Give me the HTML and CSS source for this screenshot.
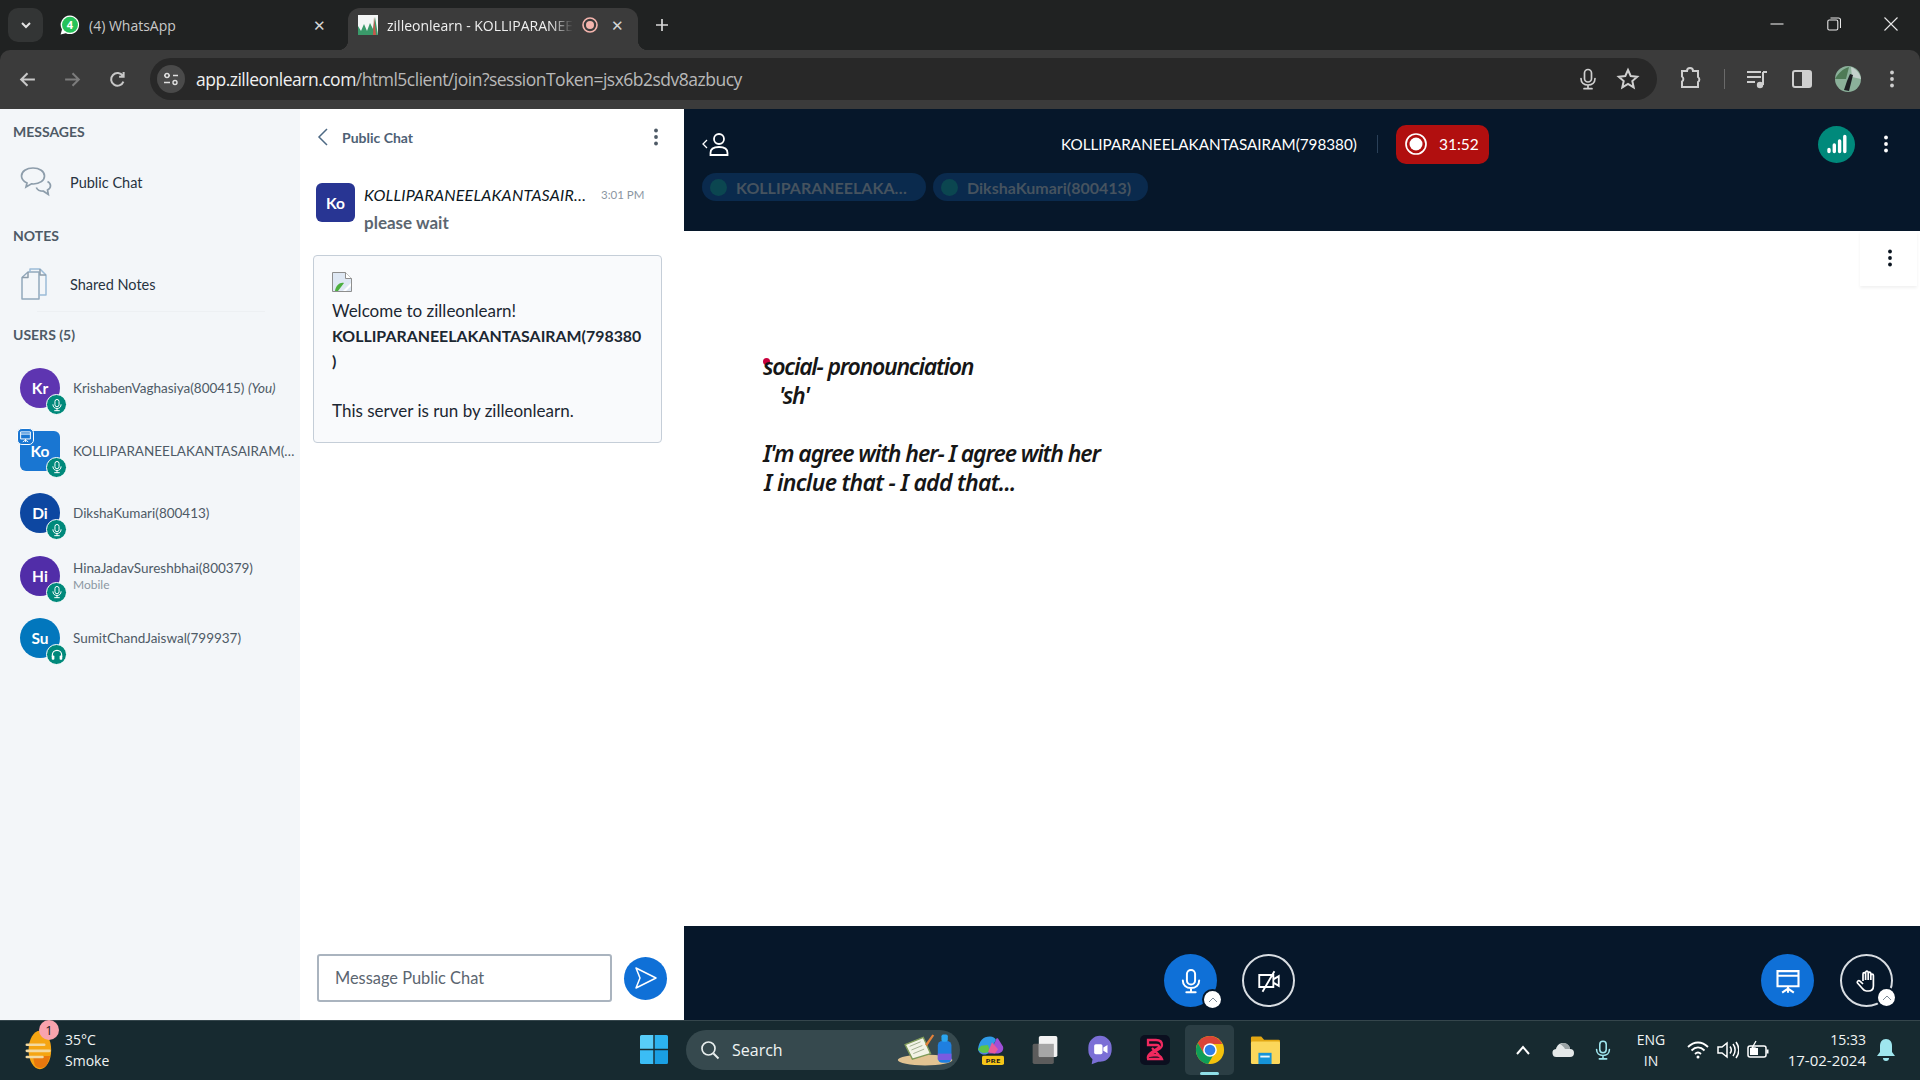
FILE: index.html
```html
<!DOCTYPE html>
<html lang="en">
<head>
  <meta charset="UTF-8" />
  <title>zilleonlearn - KOLLIPARANEELAKANTASAIRAM(798380)</title>
  <link rel="stylesheet" href="styles.css">
</head>
<body>

<svg class="defs" width="0" height="0">
  <symbol id="mic" viewBox="0 0 24 24">
    <rect x="8.5" y="2.5" width="7" height="12.5" rx="3.5" fill="none" stroke="currentColor" stroke-width="1.7"/>
    <path d="M5 11.5c0 4 3 6.5 7 6.5s7-2.5 7-6.5M12 18v3.5M8 21.7h8" fill="none" stroke="currentColor" stroke-width="1.7" stroke-linecap="round"/>
  </symbol>
  <symbol id="headset" viewBox="0 0 24 24">
    <path d="M4 15v-3a8 8 0 0 1 16 0v3" fill="none" stroke="currentColor" stroke-width="2"/>
    <rect x="3" y="13" width="4.5" height="7" rx="1.5" fill="currentColor"/>
    <rect x="16.5" y="13" width="4.5" height="7" rx="1.5" fill="currentColor"/>
  </symbol>
  <symbol id="screen" viewBox="0 0 24 24">
    <path d="M3 3.5h18v13H3zM3 7.5h18M12 16.5v2M12 18.5l-5 3.5M12 18.5l5 3.5M12 18.5v3.5" fill="none" stroke="currentColor" stroke-width="1.8"/>
  </symbol>
  <symbol id="dots" viewBox="0 0 4 18">
    <circle cx="2" cy="2.5" r="1.9" fill="currentColor"/>
    <circle cx="2" cy="9" r="1.9" fill="currentColor"/>
    <circle cx="2" cy="15.5" r="1.9" fill="currentColor"/>
  </symbol>
</svg>

<!-- browser chrome -->
<div class="tabstrip">
  <div class="tab-search">
    <svg width="12" height="12" viewBox="0 0 12 12"><path d="M2 4l4 4 4-4" fill="none" stroke="#e3e3e3" stroke-width="2"/></svg>
  </div>
  <div class="tab tab-idle">
    <svg class="favicon" viewBox="0 0 20 20">
      <path d="M10 .5a9.3 9.3 0 0 0-8 14L.6 19.5l5.2-1.3A9.3 9.3 0 1 0 10 .5z" fill="#fff"/>
      <circle cx="10" cy="9.8" r="8" fill="#25c25a"/>
      <text x="10" y="14" class="wa-count">4</text>
    </svg>
    <span class="tab-title">(4) WhatsApp</span>
    <span class="tab-close">✕</span>
  </div>
  <div class="tab tab-active">
    <svg class="favicon" viewBox="0 0 20 20">
      <rect width="20" height="20" fill="#f4f6f6"/>
      <path d="M0 20V11l3 5 3-7 3 7 3-8 3 6 2-12 3 18z" fill="#3a9a6a"/>
      <path d="M16 2l2 18h-3z" fill="#c9564b"/>
    </svg>
    <span class="tab-title">zilleonlearn - KOLLIPARANEELAKANTASAIRAM(798380)</span>
    <svg class="tab-rec" viewBox="0 0 16 16"><circle cx="8" cy="8" r="7" fill="none" stroke="#f5b5ae" stroke-width="1.6"/><circle cx="8" cy="8" r="4" fill="#f5b5ae"/></svg>
    <span class="tab-close">✕</span>
  </div>
  <svg class="new-tab" viewBox="0 0 14 14"><path d="M7 1v12M1 7h12" stroke="#d8d8d8" stroke-width="1.7"/></svg>
  <div class="win-controls">
    <svg viewBox="0 0 14 14"><path d="M.5 7h13" stroke="#e8e8e8" stroke-width="1.1"/></svg>
    <svg viewBox="0 0 14 14"><rect x=".8" y="3" width="10" height="10" rx="1.5" fill="none" stroke="#e8e8e8" stroke-width="1.1"/><path d="M3.5 1h8a2 2 0 0 1 2 2v8" fill="none" stroke="#e8e8e8" stroke-width="1.1"/></svg>
    <svg viewBox="0 0 14 14"><path d="M.5.5l13 13M13.5.5l-13 13" stroke="#e8e8e8" stroke-width="1.1"/></svg>
  </div>
</div>

<div class="toolbar">
  <svg class="nav-icon" viewBox="0 0 18 18"><path d="M16 9H3M9 3L3 9l6 6" fill="none" stroke="#c8c8c8" stroke-width="1.9"/></svg>
  <svg class="nav-icon nav-off" viewBox="0 0 18 18"><path d="M2 9h13M9 3l6 6-6 6" fill="none" stroke="#7c7c7c" stroke-width="1.9"/></svg>
  <svg class="nav-icon" viewBox="0 0 18 18"><path d="M14.6 11a6 6 0 1 1-.6-5.4M14.8 2v4.3h-4.3" fill="none" stroke="#c8c8c8" stroke-width="1.9"/></svg>
  <div class="omnibox">
    <div class="site-info">
      <svg width="16" height="16" viewBox="0 0 16 16"><path d="M1 4.5h6M1 11.5h6M10 4.5h5M10 11.5h0" stroke="#e0e0e0" stroke-width="1.6"/><circle cx="4" cy="4.5" r="2" fill="#4a4a4a" stroke="#e0e0e0" stroke-width="1.4"/><circle cx="12" cy="11.5" r="2" fill="#4a4a4a" stroke="#e0e0e0" stroke-width="1.4"/></svg>
    </div>
    <span class="url"><b>app.zilleonlearn.com</b>/html5client/join?sessionToken=jsx6b2sdv8azbucy</span>
    <svg class="omni-icon omni-mic"><use href="#mic"/></svg>
    <svg class="omni-icon" viewBox="0 0 24 24"><path d="M12 3l2.7 6 6.5.7-4.9 4.3 1.4 6.4L12 17l-5.700 3.400 1.400-6.400-4.900-4.300 6.500-.7z" fill="none" stroke="#cfcfcf" stroke-width="2"/></svg>
  </div>
  <svg class="tool-icon ext-icon" viewBox="0 0 24 24"><path d="M4 4h5a3 3 0 0 1 6 0h5v6a3 3 0 0 1 0 5v5H4v-5.500a3 3 0 0 0 0-5z" fill="none" stroke="#cfcfcf" stroke-width="2"/></svg>
  <span class="tool-divider"></span>
  <svg class="tool-icon media-icon" viewBox="0 0 24 24"><path d="M2 5h14M2 10h14M2 15h8" stroke="#cfcfcf" stroke-width="2"/><path d="M18 5v13" stroke="#cfcfcf" stroke-width="2"/><path d="M18 5h4" stroke="#cfcfcf" stroke-width="2"/><circle cx="15" cy="18" r="3.200" fill="#cfcfcf"/></svg>
  <svg class="tool-icon panel-icon" viewBox="0 0 24 24"><rect x="3" y="4" width="18" height="16" rx="2" fill="none" stroke="#cfcfcf" stroke-width="2"/><rect x="12" y="4" width="9" height="16" fill="#cfcfcf"/></svg>
  <svg class="profile" viewBox="0 0 26 26">
    <circle cx="13" cy="13" r="13" fill="#8bb09a"/>
    <path d="M0 13C4 6 8 3 14 1l-3 12z" fill="#4e7a56"/>
    <path d="M16 1c5 2 9 6 10 12l-9-2z" fill="#c3d0cc"/>
    <path d="M9 24l3-9 3-7 3 1-2 8-2 8z" fill="#1d1f24"/>
  </svg>
  <svg class="chrome-menu" viewBox="0 0 4 18"><use href="#dots"/></svg>
</div>

<div class="app">

  <aside class="sidebar">
    <div class="side-head">MESSAGES</div>
    <div class="side-item">
      <svg class="side-icon" viewBox="0 0 32 32" fill="none" stroke="#8d9dab" stroke-width="1.700">
        <path d="M13 2C6.500 2 1.500 5.500 1.500 10c0 3 2.200 5.500 5.500 7l-1 4 5.500-3.200c.7.100 1.300.200 2 .200 6.200 0 11-3.500 11-8S19.500 2 13 2z"/>
        <path d="M27.500 15.500c2 1 3 2.500 3 4.300 0 1.800-1.200 3.300-3 4.200l.8 4.500-4.800-3.300c-3.500 0-6.300-1.500-7.200-3.700"/>
      </svg>
      <span>Public Chat</span>
    </div>
    <div class="side-head notes-head">NOTES</div>
    <div class="side-item notes-item">
      <svg class="side-icon" viewBox="0 0 32 32" fill="none" stroke="#8d9dab" stroke-width="1.500" stroke-linejoin="round">
        <path d="M2 9.500L8 4h11v27H2z" stroke="#93a9bc"/>
        <path d="M2 9.500h6V4"/>
        <path d="M10 4V1h10l6 6v20h-7" stroke="#9cbcd8"/>
        <path d="M20 1v6h6"/>
      </svg>
      <span>Shared Notes</span>
    </div>
    <div class="side-rule"></div>
    <div class="side-head users-head">USERS (5)</div>
    <div class="user-list">
      <div class="user">
        <div class="avatar" style="background: #5e35b1">Kr<span class="voice"><svg><use href="#mic"/></svg></span></div>
        <div class="user-name">KrishabenVaghasiya(800415) <i>(You)</i></div>
      </div>
      <div class="user">
        <div class="avatar avatar-mod" style="background: #1976d2">Ko
          <span class="presenter"><svg><use href="#screen"/></svg></span>
          <span class="voice"><svg><use href="#mic"/></svg></span>
        </div>
        <div class="user-name">KOLLIPARANEELAKANTASAIRAM(798380)</div>
      </div>
      <div class="user">
        <div class="avatar" style="background: #0d47a1">Di<span class="voice"><svg><use href="#mic"/></svg></span></div>
        <div class="user-name">DikshaKumari(800413)</div>
      </div>
      <div class="user">
        <div class="avatar" style="background: #512da8">Hi<span class="voice"><svg><use href="#mic"/></svg></span></div>
        <div class="user-name">HinaJadavSureshbhai(800379)<small>Mobile</small></div>
      </div>
      <div class="user">
        <div class="avatar" style="background: #0277bd">Su<span class="voice"><svg><use href="#headset"/></svg></span></div>
        <div class="user-name">SumitChandJaiswal(799937)</div>
      </div>
    </div>
  </aside>

  <section class="chat">
    <div class="chat-head">
      <svg class="chat-back" viewBox="0 0 12 18"><path d="M10 1L2 9l8 8" fill="none" stroke="#4e6a85" stroke-width="1.500"/></svg>
      <span class="chat-title">Public Chat</span>
      <svg class="chat-menu" viewBox="0 0 4 18"><use href="#dots"/></svg>
    </div>
    <div class="chat-body">
      <div class="message">
        <div class="msg-avatar">Ko</div>
        <div class="msg-main">
          <div class="msg-top">
            <span class="msg-name">KOLLIPARANEELAKANTASAIRAM(798380)</span>
            <span class="msg-time">3:01 PM</span>
          </div>
          <div class="msg-text">please wait</div>
        </div>
      </div>
      <div class="welcome">
        <svg class="broken" viewBox="0 0 20 20">
          <path d="M.5.5h13l6 6v13H.5z" fill="#dfe8f4" stroke="#8e8e8e"/>
          <path d="M13.500.5v6h6" fill="#fff" stroke="#8e8e8e"/>
          <path d="M3 19c1-6 5-9 9-8l-6 8z" fill="#4caf3f"/>
          <path d="M11 19l8-8v3l-5 5z" fill="#fff"/>
        </svg>
        <div>Welcome to zilleonlearn!</div>
        <div class="welcome-name">KOLLIPARANEELAKANTASAIRAM(798380<br>)</div>
        <br>
        <div>This server is run by zilleonlearn.</div>
      </div>
    </div>
    <div class="chat-foot">
      <div class="chat-input">Message Public Chat</div>
      <div class="send-btn">
        <svg width="24" height="24" viewBox="0 0 24 24"><path d="M2 2l20 10L2 22l4-10z" fill="none" stroke="#fff" stroke-width="1.500" stroke-linejoin="round"/></svg>
      </div>
    </div>
  </section>

  <main class="main">
    <div class="nav">
      <div class="nav-top">
        <svg class="users-toggle" viewBox="0 0 28 24" fill="none" stroke="#fff" stroke-width="1.800">
          <path d="M5 8l-4 4 4 4" stroke-width="1.300"/>
          <circle cx="17" cy="7" r="5"/>
          <path d="M8.500 23v-2c0-4 3-6 8.500-6s8.500 2 8.500 6v2z"/>
        </svg>
        <span class="meeting-title">KOLLIPARANEELAKANTASAIRAM(798380)</span>
        <span class="nav-divider"></span>
        <div class="rec-btn">
          <svg width="24" height="24" viewBox="0 0 24 24"><circle cx="12" cy="12" r="10" fill="none" stroke="#fff" stroke-width="1.700"/><circle cx="12" cy="12" r="6.500" fill="#fff"/></svg>
          <span>31:52</span>
        </div>
        <div class="signal">
          <svg width="20" height="20" viewBox="0 0 20 20"><path d="M2 15.500v2M7.300 11v6.500M12.600 7v10.500M17.800 2.500v15" stroke="#fff" stroke-width="3.400" stroke-linecap="round"/></svg>
        </div>
        <svg class="nav-menu" viewBox="0 0 4 18"><use href="#dots"/></svg>
      </div>
      <div class="talkers">
        <div class="talker talker-first"><span class="talker-dot"></span><span class="talker-name">KOLLIPARANEELAKANTASAIRAM(798380)</span></div>
        <div class="talker"><span class="talker-dot"></span><span class="talker-name">DikshaKumari(800413)</span></div>
      </div>
    </div>

    <div class="whiteboard">
      <div class="wb-menu"><svg viewBox="0 0 4 18"><use href="#dots"/></svg></div>
      <span class="cursor-dot"></span>
      <div class="wb-note line-1">social- pronounciation</div>
      <div class="wb-note line-2">'sh'</div>
      <div class="wb-note line-3">I'm agree with her- I agree with her</div>
      <div class="wb-note line-4">I inclue that - I add that...</div>
    </div>

    <div class="controls">
      <div class="ctrl-center">
        <div class="round-btn filled">
          <svg width="28" height="28"><use href="#mic"/></svg>
          <span class="caret"><svg width="10" height="6" viewBox="0 0 10 6"><path d="M1 5l4-4 4 4" fill="none" stroke="#7d8a96" stroke-width="1"/></svg></span>
        </div>
        <div class="round-btn outline">
          <svg width="26" height="26" viewBox="0 0 24 24" fill="none" stroke="#fff" stroke-width="1.700"><path d="M3 6.500h13v11H3zM16 10.500l5-3v9l-5-3M17 3L6 22"/></svg>
        </div>
      </div>
      <div class="ctrl-right">
        <div class="round-btn filled">
          <svg width="28" height="28"><use href="#screen"/></svg>
        </div>
        <div class="round-btn outline">
          <svg width="24" height="24" viewBox="0 0 24 24" fill="none" stroke="#fff" stroke-width="1.700" stroke-linejoin="round"><path d="M8 12V5a1.300 1.300 0 0 1 2.600 0V3.500a1.300 1.300 0 0 1 2.600 0V4.500a1.300 1.300 0 0 1 2.600 0V6.500a1.300 1.300 0 0 1 2.600 0V17c0 3-2 5-5 5h-2c-2 0-3-1-4-2.500L2.500 14c-1-1.500 1-3 2.500-1.800L8 15M10.600 5v6M13.200 4.500V11M15.800 6.500V11"/></svg>
          <span class="caret"><svg width="10" height="6" viewBox="0 0 10 6"><path d="M1 5l4-4 4 4" fill="none" stroke="#7d8a96" stroke-width="1"/></svg></span>
        </div>
      </div>
    </div>
  </main>
</div>

<!-- windows taskbar -->
<footer class="taskbar">
  <div class="weather">
    <svg class="weather-icon" viewBox="0 0 30 46">
      <ellipse cx="16" cy="23" rx="13" ry="22" fill="#f5a512"/>
      <path d="M10 40c3 5 10 5 14 0l4-10H8z" fill="#e8780e"/>
      <path d="M1 17h20M1 24h26M1 31h18" stroke="#f3d9a0" stroke-width="3" stroke-linecap="round"/>
    </svg>
    <span class="weather-badge">1</span>
    <div class="weather-text"><div>35°C</div><div>Smoke</div></div>
  </div>

  <div class="task-center">
    <svg class="win-logo" viewBox="0 0 28 29">
      <path d="M0 1.500A1.500 1.500 0 0 1 1.500 0h11.800v13.800H0z" fill="#58cdf9"/>
      <path d="M14.700 0h11.800A1.500 1.500 0 0 1 28 1.500v12.300H14.700z" fill="#2cb3f0"/>
      <path d="M0 15.200h13.300V29H1.500A1.500 1.500 0 0 1 0 27.500z" fill="#3bbdf5"/>
      <path d="M14.700 15.200H28v12.300a1.500 1.500 0 0 1-1.500 1.500H14.700z" fill="#1a9fe3"/>
    </svg>
    <div class="task-search">
      <svg width="20" height="20" viewBox="0 0 20 20"><circle cx="8.500" cy="8.500" r="6.500" fill="none" stroke="#e8eeee" stroke-width="1.700"/><path d="M13.500 13.500l5 5" stroke="#e8eeee" stroke-width="1.900"/></svg>
      <span>Search</span>
      <svg class="search-art" viewBox="0 0 66 36">
        <ellipse cx="32" cy="29" rx="30" ry="6" fill="#e2c392"/>
        <path d="M10 12l20-8 8 18-20 6z" fill="#f2f3e6" stroke="#7f9a58" stroke-width="1.500"/>
        <path d="M15 14l12-5M17 18l12-5M19 22l12-5" stroke="#9aa98a" stroke-width="1"/>
        <path d="M32 12l8-11 2 1-8 12z" fill="#e4823a"/>
        <rect x="46" y="8" width="15" height="24" rx="5" fill="#1f7fe0"/>
        <rect x="50" y="1" width="7" height="8" rx="2" fill="#2aa5f0"/>
        <rect x="46" y="22" width="15" height="7" fill="#7b5be0"/>
      </svg>
    </div>
    <div class="task-icons">
      <div class="task-app">
        <svg viewBox="0 0 30 42" preserveAspectRatio="none">
          <path d="M3 20C4 8 8 2 15 2c3 0 5 2 6 5l-7 17c-2 5-10 5-11-4z" fill="#2f9be8"/>
          <path d="M4 22c2 6 9 6 11 1l6-16c0-2 1-3 2-2l5 11c1 5-1 10-7 10H10c-3 0-5-2-6-4z" fill="#a04fd8"/>
          <path d="M3 20c1 3 4 6 8 5l4-2-2-9-7 1z" fill="#5ec44a"/>
          <path d="M17 10l-4 14 7 2 3-6z" fill="#e85a9c"/>
          <rect x="7" y="29" width="22" height="13" rx="2" fill="#f5c518"/>
          <text x="18" y="39.500" class="pre-label">PRE</text>
        </svg>
      </div>
      <div class="task-app">
        <svg viewBox="0 0 30 34">
          <rect x="1" y="10" width="24" height="23" rx="2" fill="#5c5c5c"/>
          <rect x="8" y="1" width="21" height="24" rx="2" fill="#f2f2f2"/>
          <rect x="8" y="10" width="17" height="15" fill="#a6a6a6"/>
        </svg>
      </div>
      <div class="task-app">
        <svg viewBox="0 0 30 36">
          <path d="M15 1a14 14 0 0 1 14 14v3a14 14 0 0 1-16 14l-8 3 1-6A14 14 0 0 1 1 18v-3A14 14 0 0 1 15 1z" fill="#7b6fd6"/>
          <rect x="8" y="11" width="10" height="12" rx="2" fill="#fff"/>
          <path d="M19 15l5-3v10l-5-3z" fill="#fff"/>
        </svg>
      </div>
      <div class="task-app">
        <svg viewBox="0 0 30 30">
          <rect width="30" height="30" rx="5" fill="#0b0f1f"/>
          <path d="M8 5h8c4 0 6 2 6 5s-3 4-6 6l-8 5 7-1c4 0 6 1 7 4H8c-1-3 1-5 4-7l6-4c2-1 1-3-1-3h-9zM12 13l7 7" fill="none" stroke="#f0295f" stroke-width="2.300"/>
        </svg>
      </div>
      <div class="task-app task-active">
        <svg viewBox="0 0 32 32">
          <circle cx="16" cy="16" r="15" fill="#f4c20d"/>
          <path d="M16 1A15 15 0 0 0 3 8.500L9.500 19.700 16 9.500h13A15 15 0 0 0 16 1z" fill="#db4437"/>
          <path d="M3 8.500A15 15 0 0 0 14 30.900l6.500-11.300L9.500 19.700z" fill="#0f9d58"/>
          <circle cx="16" cy="16" r="7.300" fill="#fff"/>
          <circle cx="16" cy="16" r="5.700" fill="#2f7fe8"/>
        </svg>
        <span class="task-pip"></span>
      </div>
      <div class="task-app">
        <svg viewBox="0 0 32 30">
          <path d="M1 2a1.500 1.500 0 0 1 1.500-1.500H12L15 4h15.500A1.500 1.500 0 0 1 32 5.500V10H1z" fill="#e3a713"/>
          <rect x="1" y="6" width="31" height="24" rx="1.500" fill="#fbd75b"/>
          <rect x="9" y="18" width="14" height="12" fill="#1593d8"/>
          <rect x="11" y="21" width="10" height="2" fill="#eaf6fc"/>
        </svg>
      </div>
    </div>
  </div>

  <div class="tray">
    <div class="tray-item"><svg width="14" height="10" viewBox="0 0 14 10"><path d="M1 9l6-7 6 7" fill="none" stroke="#fff" stroke-width="2"/></svg></div>
    <div class="tray-item"><svg width="22" height="16" viewBox="0 0 22 16"><path d="M5 15a4 4 0 0 1-1-8C5 3 8 1 11 1c4 0 7 3 7 6a4 4 0 0 1 0 8z" fill="#e4e8e8"/><path d="M11 1c4 0 7 3 7 6h-5C12 5 10 3 8 2z" fill="#9aa3a5"/></svg></div>
    <div class="tray-item tray-mic"><svg width="22" height="24"><use href="#mic"/></svg></div>
    <div class="tray-lang"><div>ENG</div><div>IN</div></div>
    <div class="tray-item tray-small"><svg width="22" height="20" viewBox="0 0 22 20" fill="none" stroke="#fff" stroke-width="1.800"><path d="M1 7c6-6 14-6 20 0M4.500 10.500c4-4 9-4 13 0M8 14c2-2 4-2 6 0"/><circle cx="11" cy="17" r="1.500" fill="#fff" stroke="none"/></svg></div>
    <div class="tray-item tray-small"><svg width="22" height="20" viewBox="0 0 22 20" fill="none" stroke="#fff" stroke-width="1.500"><path d="M1 7h4l5-4v14l-5-4H1zM13 6.500c1.500 2 1.500 5 0 7M16 4c2.800 3.500 2.800 8.500 0 12M19 2c3.500 5 3.500 11 0 16"/></svg></div>
    <div class="tray-item tray-small"><svg width="22" height="20" viewBox="0 0 22 20"><rect x="1" y="6" width="18" height="11" rx="2" fill="none" stroke="#fff" stroke-width="1.500"/><rect x="3" y="8" width="8" height="7" fill="#fff"/><rect x="19.500" y="9.500" width="2" height="4" fill="#fff"/><path d="M9 1L5 8h3l-1 5" fill="none" stroke="#fff" stroke-width="1.300"/></svg></div>
    <div class="tray-clock"><div>15:33</div><div class="tray-date">17-02-2024</div></div>
    <svg class="tray-bell" viewBox="0 0 20 24"><path d="M10 1c4 0 6 3 6 7v6l3 4H1l3-4V8c0-4 2-7 6-7z" fill="#9fe6ee"/><path d="M7 20a3 3 0 0 0 6 0z" fill="#9fe6ee"/></svg>
  </div>
</footer>

</body>
</html>
```
FILE: styles.css
```css
* {
  box-sizing: border-box;
}

html, body {
  height: 100%;
}

body {
  margin: 0;
  height: 1080px;
  overflow: hidden;
  display: flex;
  flex-direction: column;
  font-family: Lato, "Noto Sans", sans-serif;
  background: #202222;
}

.defs {
  position: absolute;
}

/* browser tabs */
.tabstrip {
  height: 50px;
  flex: none;
  display: flex;
  align-items: flex-end;
  background: #202222;
  font-family: "Open Sans", sans-serif;
  font-size: 14px;
  color: #c9c9c9;
}

.tab-search {
  width: 35px;
  height: 34px;
  margin: 0 8px 8px 8px;
  border-radius: 10px;
  background: #333535;
  display: flex;
  align-items: center;
  justify-content: center;
}

.tab {
  height: 42px;
  padding-bottom: 8px;
  display: flex;
  align-items: center;
  gap: 9px;
}

.tab-idle {
  width: 297px;
  padding-left: 9px;
  padding-right: 22px;
}

.tab-active {
  position: relative;
  width: 290px;
  padding-left: 10px;
  padding-right: 14px;
  background: #3b3b3b;
  border-radius: 12px 12px 0 0;
  color: #f0f0f0;
}

.tab-active::before,
.tab-active::after {
  content: "";
  position: absolute;
  bottom: 0;
  width: 10px;
  height: 10px;
}

.tab-active::before {
  left: -10px;
  background: radial-gradient(circle at 0 0, transparent 10px, #3b3b3b 10.5px);
}

.tab-active::after {
  right: -10px;
  background: radial-gradient(circle at 100% 0, transparent 10px, #3b3b3b 10.5px);
}

.tab-active .tab-title {
  mask-image: linear-gradient(to right, #000 88%, transparent);
}

.favicon {
  width: 20px;
  height: 20px;
  flex: none;
}

.wa-count {
  font-size: 11px;
  font-weight: 700;
  fill: #fff;
  text-anchor: middle;
}

.tab-title {
  flex: 1;
  min-width: 0;
  white-space: nowrap;
  overflow: hidden;
}

.tab-rec {
  width: 16px;
  height: 16px;
  flex: none;
}

.tab-close {
  font-size: 15px;
  color: #d5d5d5;
  flex: none;
}

.tab-active .tab-close {
  margin-left: 4px;
}

.new-tab {
  width: 14px;
  height: 14px;
  margin: 0 0 18px 17px;
}

.win-controls {
  margin-left: auto;
  margin-right: 22px;
  margin-bottom: 19px;
  display: flex;
  gap: 43px;
}

.win-controls svg {
  width: 14px;
  height: 14px;
}

/* address bar */
.toolbar {
  height: 59px;
  flex: none;
  padding: 0 0 1px 18px;
  display: flex;
  align-items: center;
  background: #3b3b3b;
  border-radius: 10px 10px 0 0;
}

.nav-icon {
  width: 19px;
  height: 19px;
  margin-right: 26px;
  flex: none;
}

.omnibox {
  width: 1507px;
  height: 42px;
  margin-left: -3px;
  padding: 0 13px 0 7px;
  display: flex;
  align-items: center;
  border-radius: 21px;
  background: #282828;
  flex: none;
}

.site-info {
  width: 28px;
  height: 28px;
  border-radius: 50%;
  background: #4a4a4a;
  display: flex;
  align-items: center;
  justify-content: center;
  flex: none;
}

.url {
  margin-left: 11px;
  flex: 1;
  font-family: "Open Sans", sans-serif;
  font-size: 17.5px;
  letter-spacing: -0.5px;
  color: #b9b9b9;
  white-space: nowrap;
}

.url b {
  font-weight: 400;
  color: #f0f0f0;
}

.omni-icon {
  width: 24px;
  height: 24px;
  flex: none;
  color: #cfcfcf;
  margin-right: 4px;
}

.omni-mic {
  margin-right: 16px;
}

.tool-icon {
  width: 24px;
  height: 24px;
  flex: none;
}

.ext-icon {
  margin-left: 21px;
}

.tool-divider {
  width: 1px;
  height: 20px;
  margin: 0 20px 0 22px;
  background: #6a6a6a;
}

.panel-icon {
  margin-left: 21px;
}

.profile {
  width: 26px;
  height: 26px;
  margin-left: 21px;
  flex: none;
}

.chrome-menu {
  width: 4px;
  height: 18px;
  margin-left: 29px;
  color: #cfcfcf;
}

/* page */
.app {
  height: 911px;
  flex: none;
  display: flex;
  background: #fff;
}

.sidebar {
  width: 300px;
  flex: none;
  background: #f3f6f9;
  color: #4e5a66;
}

.side-head {
  height: 18px;
  margin: 14px 0 0 13px;
  font-size: 14px;
  font-weight: 700;
  line-height: 18px;
  color: #4e5a66;
}

.side-item {
  height: 50px;
  margin-top: 16px;
  padding-left: 20px;
  display: flex;
  align-items: center;
  gap: 18px;
  font-size: 14.500px;
  color: #27333f;
}

.side-icon {
  width: 32px;
  height: 32px;
  flex: none;
}

.notes-head {
  margin-top: 20px;
}

.notes-item {
  margin-top: 14px;
}

.side-rule {
  height: 1px;
  margin: 2px 35px 0 37px;
  background: #edf0f3;
}

.users-head {
  margin-top: 14px;
}

.user-list {
  margin-top: 13px;
  display: grid;
  grid-template-columns: minmax(0, 1fr);
  grid-auto-rows: 62.500px;
}

.user {
  padding-left: 20px;
  display: flex;
  align-items: center;
  gap: 13px;
}

.avatar {
  position: relative;
  width: 40px;
  height: 40px;
  flex: none;
  border-radius: 50%;
  display: flex;
  align-items: center;
  justify-content: center;
  color: #fff;
  font-size: 15.500px;
  font-weight: 700;
}

.avatar-mod {
  border-radius: 6px;
}

.voice {
  position: absolute;
  right: -7px;
  bottom: -7px;
  width: 21px;
  height: 21px;
  border-radius: 50%;
  background: #00897b;
  border: 1px solid #fff;
  display: flex;
  align-items: center;
  justify-content: center;
  color: #fff;
}

.voice svg {
  width: 14px;
  height: 14px;
}

.presenter {
  position: absolute;
  left: -3px;
  top: -3px;
  width: 17px;
  height: 17px;
  border-radius: 5px;
  background: #1976d2;
  border: 1px solid #fff;
  display: flex;
  align-items: center;
  justify-content: center;
  color: #fff;
}

.presenter svg {
  width: 13px;
  height: 13px;
}

.user-name {
  min-width: 0;
  flex: 1;
  margin-right: 3px;
  font-size: 13.500px;
  color: #4e5a66;
  white-space: nowrap;
  overflow: hidden;
  text-overflow: ellipsis;
}

.user-name small {
  display: block;
  margin-top: 1px;
  font-size: 12px;
  color: #8b96a2;
}

/* chat column */
.chat {
  width: 384px;
  flex: none;
  display: flex;
  flex-direction: column;
  background: #fff;
}

.chat-head {
  height: 56px;
  flex: none;
  padding: 0 26px 0 17px;
  display: flex;
  align-items: center;
}

.chat-back {
  width: 12px;
  height: 18px;
}

.chat-title {
  margin-left: 13px;
  flex: 1;
  font-size: 14px;
  font-weight: 700;
  color: #4e6175;
}

.chat-menu {
  width: 4px;
  height: 18px;
  color: #4e5a66;
}

.chat-body {
  flex: 1;
  padding: 18px 22px 0 13px;
}

.message {
  display: flex;
  gap: 9px;
  padding-left: 3px;
}

.msg-avatar {
  width: 39px;
  height: 39px;
  flex: none;
  border-radius: 6px;
  background: #283593;
  color: #fff;
  font-size: 15.500px;
  font-weight: 700;
  display: flex;
  align-items: center;
  justify-content: center;
}

.msg-main {
  flex: 1;
  min-width: 0;
}

.msg-top {
  height: 22px;
  display: flex;
  align-items: center;
  gap: 13px;
}

.msg-name {
  width: 224px;
  font-size: 16px;
  letter-spacing: 0.2px;
  font-style: italic;
  color: #0c1722;
  white-space: nowrap;
  overflow: hidden;
  text-overflow: ellipsis;
}

.msg-time {
  flex: none;
  font-size: 11.500px;
  color: #8b96a2;
}

.msg-text {
  margin-top: 7px;
  font-size: 17px;
  font-weight: 700;
  color: #5c6670;
}

.welcome {
  width: 349px;
  height: 188px;
  margin-top: 22px;
  padding: 16px 15px 0 18px;
  border: 1px solid #c5ced8;
  border-radius: 4px;
  background: #f9fafc;
  font-size: 17px;
  line-height: 25px;
  color: #1c2732;
}

.welcome-name {
  font-size: 15.900px;
  font-weight: 700;
}

.broken {
  display: block;
  width: 20px;
  height: 20px;
  margin-bottom: 6px;
}

.chat-foot {
  flex: none;
  padding: 0 17px 18px 17px;
  display: flex;
  align-items: center;
  gap: 12px;
}

.chat-input {
  width: 295px;
  height: 48px;
  padding: 0 0 2px 16px;
  border: 2px solid #aab4bf;
  border-radius: 3px;
  background: #fff;
  display: flex;
  align-items: center;
  font-size: 16.400px;
  color: #5b6570;
}

.send-btn {
  width: 43px;
  height: 43px;
  border-radius: 50%;
  background: #0f70d7;
  display: flex;
  align-items: center;
  justify-content: center;
}

/* meeting area */
.main {
  flex: 1;
  min-width: 0;
  display: flex;
  flex-direction: column;
}

.nav {
  height: 122px;
  flex: none;
  padding: 15px 0 0 18px;
  background: #06172a;
  color: #fff;
}

.nav-top {
  height: 40px;
  display: flex;
  align-items: center;
}

.users-toggle {
  width: 28px;
  height: 24px;
  flex: none;
}

.meeting-title {
  width: 296px;
  margin-left: 331px;
  padding-bottom: 1px;
  flex: none;
  font-size: 15.250px;
  white-space: nowrap;
}

.nav-divider {
  width: 1px;
  height: 18px;
  margin: 0 19px 0 20px;
  background: #2a4058;
}

.rec-btn {
  width: 93px;
  height: 39px;
  margin-left: -1px;
  padding-left: 8px;
  border-radius: 10px;
  background: #b10f0f;
  display: flex;
  align-items: center;
  gap: 11px;
  font-size: 15.500px;
}

.signal {
  width: 37px;
  height: 37px;
  margin-left: 329px;
  border-radius: 50%;
  background: #00897b;
  display: flex;
  align-items: center;
  justify-content: center;
}

.nav-menu {
  width: 4px;
  height: 18px;
  margin-left: 29px;
  color: #fff;
}

.talkers {
  margin-top: 9px;
  display: flex;
  gap: 7px;
}

.talker {
  height: 28px;
  padding: 0 17px 0 8px;
  display: flex;
  align-items: center;
  gap: 9px;
  border-radius: 14px;
  background: #0a2a4d;
  font-size: 16px;
  font-weight: 700;
  color: #46535f;
}

.talker-first {
  width: 224px;
}

.talker-dot {
  width: 17px;
  height: 17px;
  flex: none;
  border-radius: 50%;
  background: #0b4650;
}

.talker-name {
  min-width: 0;
  white-space: nowrap;
  overflow: hidden;
  text-overflow: ellipsis;
}

.whiteboard {
  position: relative;
  flex: 1;
  background: #fff;
}

.wb-menu {
  position: absolute;
  right: 3px;
  top: 0;
  width: 57px;
  height: 55px;
  background: #fff;
  box-shadow: 0 2px 3px rgba(0, 0, 0, 0.06);
  display: flex;
  justify-content: center;
  padding-top: 18px;
  color: #0b1520;
}

.wb-menu svg {
  width: 4px;
  height: 18px;
  margin-left: 3px;
}

.cursor-dot {
  position: absolute;
  left: 79px;
  top: 127px;
  width: 7px;
  height: 7px;
  border-radius: 50%;
  background: #c9003c;
}

.wb-note {
  position: absolute;
  left: 79px;
  font-family: "Noto Sans", sans-serif;
  font-size: 23px;
  line-height: 30px;
  font-style: italic;
  font-weight: 600;
  color: #161616;
  white-space: nowrap;
}

.line-1 {
  top: 120px;
  letter-spacing: -1.250px;
}

.line-2 {
  top: 149px;
  left: 95px;
  letter-spacing: -1.200px;
}

.line-3 {
  top: 207px;
  letter-spacing: -1.100px;
}

.line-4 {
  top: 236px;
  left: 80px;
  letter-spacing: -0.700px;
}

.controls {
  height: 94px;
  flex: none;
  padding: 28px 27px 0 480px;
  display: flex;
  justify-content: space-between;
  background: #06172a;
}

.ctrl-center {
  display: flex;
  gap: 25px;
}

.ctrl-right {
  display: flex;
  gap: 26px;
}

.round-btn {
  position: relative;
  width: 53px;
  height: 53px;
  border-radius: 50%;
  display: flex;
  align-items: center;
  justify-content: center;
  color: #fff;
}

.filled {
  background: #0f70d7;
}

.outline {
  border: 2px solid #d8dde2;
}

.caret {
  position: absolute;
  right: -4px;
  bottom: -1px;
  width: 17px;
  height: 17px;
  border-radius: 50%;
  background: #fff;
  box-shadow: 0 0 0 2px #06172a;
  display: flex;
  align-items: center;
  justify-content: center;
}

/* windows taskbar */
.taskbar {
  height: 60px;
  flex: none;
  padding-bottom: 2px;
  display: flex;
  align-items: center;
  background: #172a30;
  border-top: 1px solid #35464c;
  font-family: "Open Sans", sans-serif;
  font-size: 14px;
  color: #f0f4f4;
}

.weather {
  position: relative;
  width: 640px;
  flex: none;
  padding-left: 25px;
  display: flex;
  align-items: center;
  gap: 12px;
}

.weather-icon {
  width: 28px;
  height: 40px;
  flex: none;
}

.weather-badge {
  position: absolute;
  left: 39px;
  top: -9px;
  width: 20px;
  height: 20px;
  border-radius: 50%;
  background: #f9a3ad;
  color: #1b1b1b;
  font-size: 13px;
  line-height: 20px;
  text-align: center;
}

.weather-text {
  line-height: 21px;
}

.task-center {
  display: flex;
  align-items: center;
}

.win-logo {
  width: 28px;
  height: 29px;
  flex: none;
}

.task-search {
  width: 274px;
  height: 40px;
  margin-left: 18px;
  padding-left: 14px;
  border-radius: 20px;
  background: #36494e;
  display: flex;
  align-items: center;
  gap: 12px;
  font-size: 16px;
}

.search-art {
  width: 60px;
  height: 36px;
  margin-left: auto;
  margin-right: 4px;
}

.task-icons {
  margin-left: 5px;
  display: flex;
  gap: 6px;
}

.task-app {
  position: relative;
  width: 49px;
  height: 50px;
  display: flex;
  align-items: center;
  justify-content: center;
  border-radius: 5px;
}

.task-app svg {
  width: 30px;
  height: 30px;
}

.task-active {
  background: #2b3e44;
}

.pre-label {
  font-size: 8px;
  font-weight: 700;
  fill: #1b1b1b;
  text-anchor: middle;
}

.task-pip {
  position: absolute;
  left: 15px;
  bottom: 0;
  width: 19px;
  height: 3px;
  border-radius: 2px;
  background: #8fe0e8;
}

.tray {
  margin-left: auto;
  padding-right: 24px;
  display: flex;
  align-items: center;
}

.tray-item {
  width: 40px;
  display: flex;
  justify-content: center;
}

.tray-mic {
  color: #9fe6ee;
}

.tray-small {
  width: 30px;
}

.tray-lang {
  width: 50px;
  margin: 0 7px 0 3px;
  text-align: center;
  line-height: 21px;
}

.tray-clock {
  width: 93px;
  text-align: right;
  line-height: 21px;
  white-space: nowrap;
}

.tray-date {
  font-size: 15px;
}

.tray-bell {
  width: 20px;
  height: 24px;
  margin-left: 10px;
}
```
